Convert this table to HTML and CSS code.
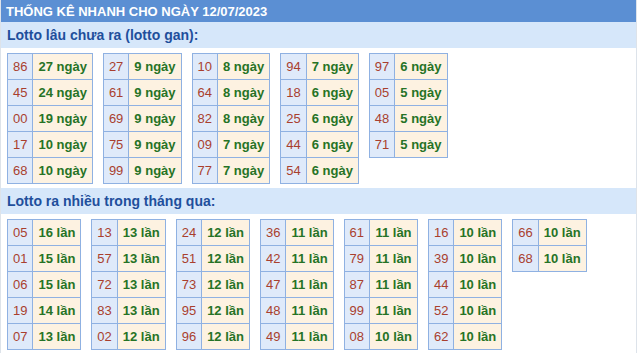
FILE: index.html
```html
<!DOCTYPE html>
<html lang="vi">
<head>
<meta charset="utf-8">
<title>Thống kê nhanh</title>
<link rel="stylesheet" href="styles.css">
</head>
<body>
<div class="box">
  <div class="title">THỐNG KÊ NHANH CHO NGÀY 12/07/2023</div>
  <div class="sub">Lotto lâu chưa ra (lotto gan):</div>
  <div class="tables">
    <table><tr><td class="n">86</td><td class="v">27 ngày</td></tr><tr><td class="n">45</td><td class="v">24 ngày</td></tr><tr><td class="n">00</td><td class="v">19 ngày</td></tr><tr><td class="n">17</td><td class="v">10 ngày</td></tr><tr><td class="n">68</td><td class="v">10 ngày</td></tr></table>
    <table><tr><td class="n">27</td><td class="v">9 ngày</td></tr><tr><td class="n">61</td><td class="v">9 ngày</td></tr><tr><td class="n">69</td><td class="v">9 ngày</td></tr><tr><td class="n">75</td><td class="v">9 ngày</td></tr><tr><td class="n">99</td><td class="v">9 ngày</td></tr></table>
    <table><tr><td class="n">10</td><td class="v">8 ngày</td></tr><tr><td class="n">64</td><td class="v">8 ngày</td></tr><tr><td class="n">82</td><td class="v">8 ngày</td></tr><tr><td class="n">09</td><td class="v">7 ngày</td></tr><tr><td class="n">77</td><td class="v">7 ngày</td></tr></table>
    <table><tr><td class="n">94</td><td class="v">7 ngày</td></tr><tr><td class="n">18</td><td class="v">6 ngày</td></tr><tr><td class="n">25</td><td class="v">6 ngày</td></tr><tr><td class="n">44</td><td class="v">6 ngày</td></tr><tr><td class="n">54</td><td class="v">6 ngày</td></tr></table>
    <table><tr><td class="n">97</td><td class="v">6 ngày</td></tr><tr><td class="n">05</td><td class="v">5 ngày</td></tr><tr><td class="n">48</td><td class="v">5 ngày</td></tr><tr><td class="n">71</td><td class="v">5 ngày</td></tr></table>
  </div>
  <div class="sub sub2">Lotto ra nhiều trong tháng qua:</div>
  <div class="tables">
    <table><tr><td class="n">05</td><td class="v">16 lần</td></tr><tr><td class="n">01</td><td class="v">15 lần</td></tr><tr><td class="n">06</td><td class="v">15 lần</td></tr><tr><td class="n">19</td><td class="v">14 lần</td></tr><tr><td class="n">07</td><td class="v">13 lần</td></tr></table>
    <table><tr><td class="n">13</td><td class="v">13 lần</td></tr><tr><td class="n">57</td><td class="v">13 lần</td></tr><tr><td class="n">72</td><td class="v">13 lần</td></tr><tr><td class="n">83</td><td class="v">13 lần</td></tr><tr><td class="n">02</td><td class="v">12 lần</td></tr></table>
    <table><tr><td class="n">24</td><td class="v">12 lần</td></tr><tr><td class="n">51</td><td class="v">12 lần</td></tr><tr><td class="n">73</td><td class="v">12 lần</td></tr><tr><td class="n">95</td><td class="v">12 lần</td></tr><tr><td class="n">96</td><td class="v">12 lần</td></tr></table>
    <table><tr><td class="n">36</td><td class="v">11 lần</td></tr><tr><td class="n">42</td><td class="v">11 lần</td></tr><tr><td class="n">47</td><td class="v">11 lần</td></tr><tr><td class="n">48</td><td class="v">11 lần</td></tr><tr><td class="n">49</td><td class="v">11 lần</td></tr></table>
    <table><tr><td class="n">61</td><td class="v">11 lần</td></tr><tr><td class="n">79</td><td class="v">11 lần</td></tr><tr><td class="n">87</td><td class="v">11 lần</td></tr><tr><td class="n">99</td><td class="v">11 lần</td></tr><tr><td class="n">08</td><td class="v">10 lần</td></tr></table>
    <table><tr><td class="n">16</td><td class="v">10 lần</td></tr><tr><td class="n">39</td><td class="v">10 lần</td></tr><tr><td class="n">44</td><td class="v">10 lần</td></tr><tr><td class="n">52</td><td class="v">10 lần</td></tr><tr><td class="n">62</td><td class="v">10 lần</td></tr></table>
    <table><tr><td class="n">66</td><td class="v">10 lần</td></tr><tr><td class="n">68</td><td class="v">10 lần</td></tr></table>
  </div>
</div>
</body>
</html>
```
FILE: styles.css
```css
html, body {
  margin: 0;
  padding: 0;
  background: #ffffff;
}
body {
  font-family: "Liberation Sans", Arial, sans-serif;
  font-size: 13px;
}
.box {
  width: 635px;
  height: 353px;
  border-left: 1px solid #dde3ea;
  border-right: 1px solid #dde3ea;
  overflow: hidden;
}
.title {
  height: 22px;
  line-height: 23px;
  background: #5b8fd3;
  color: #ffffff;
  font-weight: bold;
  font-size: 13px;
  padding-left: 5px;
}
.sub {
  height: 26px;
  line-height: 26px;
  background: #d6e7fa;
  color: #1f4f9c;
  font-weight: bold;
  font-size: 14px;
  padding-left: 6px;
}
.sub2 {
  margin-top: 4px;
}
.tables {
  display: flex;
  align-items: flex-start;
  gap: 10px;
  padding: 5px 0 0 6px;
}
table {
  border-collapse: collapse;
  border: 1px solid #8fb1e2;
}
td {
  border: 1px solid #8fb1e2;
  height: 25px;
  line-height: 15px;
  padding: 0 5px;
  text-align: center;
  white-space: nowrap;
}
td.n {
  background: #dfeafa;
  color: #a93f2e;
}
td.v {
  background: #fdf2e1;
  color: #267326;
  font-weight: bold;
}
```
